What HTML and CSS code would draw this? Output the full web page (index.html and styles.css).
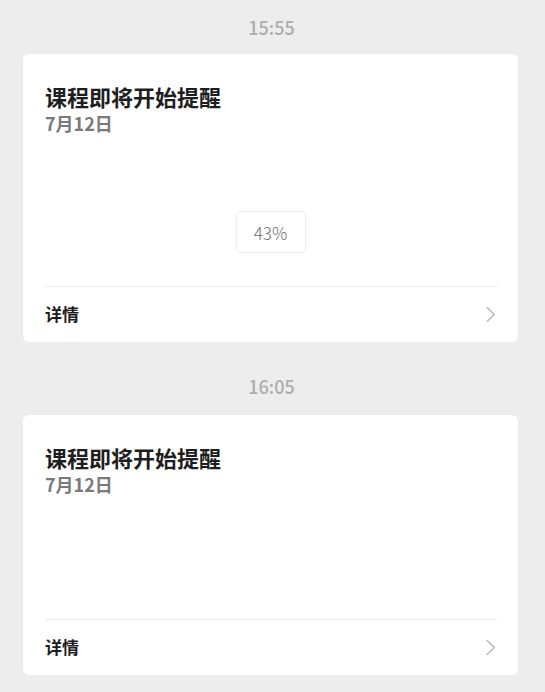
FILE: index.html
```html
<!DOCTYPE html>
<html lang="zh">
<head>
<meta charset="utf-8">
<link rel="stylesheet" href="styles.css">
</head>
<body>
<div class="feed">
  <div class="time">15:55</div>
  <div class="card">
    <div class="body body-progress">
      <div class="title">课程即将开始提醒</div>
      <div class="date">7月12日</div>
      <div class="progress-wrap"><div class="progress">43%</div></div>
    </div>
    <div class="detail">
      <span class="detail-text">详情</span>
      <svg class="chev" width="10" height="17" viewBox="0 0 10 17"><path d="M1.2 1.5 L8.3 8.5 L1.2 15.5" fill="none" stroke="#b8b8b8" stroke-width="1.6" stroke-linecap="round" stroke-linejoin="round"/></svg>
    </div>
  </div>
  <div class="time time-gap">16:05</div>
  <div class="card">
    <div class="body body-plain">
      <div class="title">课程即将开始提醒</div>
      <div class="date">7月12日</div>
    </div>
    <div class="detail">
      <span class="detail-text">详情</span>
      <svg class="chev" width="10" height="17" viewBox="0 0 10 17"><path d="M1.2 1.5 L8.3 8.5 L1.2 15.5" fill="none" stroke="#b8b8b8" stroke-width="1.6" stroke-linecap="round" stroke-linejoin="round"/></svg>
    </div>
  </div>
</div>
</body>
</html>
```
FILE: styles.css
```css
html, body {
  margin: 0;
  padding: 0;
  background: #ededed;
}
body {
  font-family: "Liberation Sans", "Noto Sans CJK SC", sans-serif;
  width: 545px;
  height: 692px;
  overflow: hidden;
}
.feed {
  display: flex;
  flex-direction: column;
  padding: 0 27px 0 23px;
}
.time {
  height: 54px;
  line-height: 54px;
  text-align: center;
  font-family: "Noto Sans CJK SC", sans-serif;
  font-size: 18px;
  font-weight: 500;
  color: #adadad;
  padding-left: 2px;
}
.time-gap {
  margin-top: 18px;
  height: 55px;
  line-height: 52px;
}
.card {
  background: #fff;
  border-radius: 6px;
  display: flex;
  flex-direction: column;
}
.body {
  padding: 28px 20px 0 22px;
  box-sizing: border-box;
}
.body-progress {
  height: 232px;
}
.body-plain {
  height: 204px;
}
.title {
  font-family: "Noto Sans CJK SC", sans-serif;
  font-size: 22px;
  line-height: 28px;
  font-weight: bold;
  color: #1e1e1e;
}
.date {
  font-family: "Noto Sans CJK SC", sans-serif;
  font-size: 18px;
  line-height: 24px;
  font-weight: bold;
  color: #7a7a7a;
  margin-top: 1px;
}
.progress-wrap {
  display: flex;
  justify-content: center;
  margin-top: 76px;
}
.progress {
  width: 68px;
  height: 40px;
  border: 1px solid #ececec;
  border-radius: 4px;
  display: flex;
  align-items: center;
  justify-content: center;
  font-family: "Noto Sans CJK SC", sans-serif;
  font-weight: 300;
  font-size: 17px;
  color: #6e6e6e;
  margin-left: -2px;
}
.detail {
  margin: 0 20px 0 22px;
  border-top: 1px solid #efefef;
  height: 55px;
  display: flex;
  align-items: center;
  justify-content: space-between;
}
.detail-text {
  font-family: "Noto Sans CJK SC", sans-serif;
  font-size: 17px;
  line-height: 20px;
  font-weight: bold;
  color: #1e1e1e;
  margin-top: -2px;
}
.chev {
  display: block;
  margin-right: 2px;
}
```
